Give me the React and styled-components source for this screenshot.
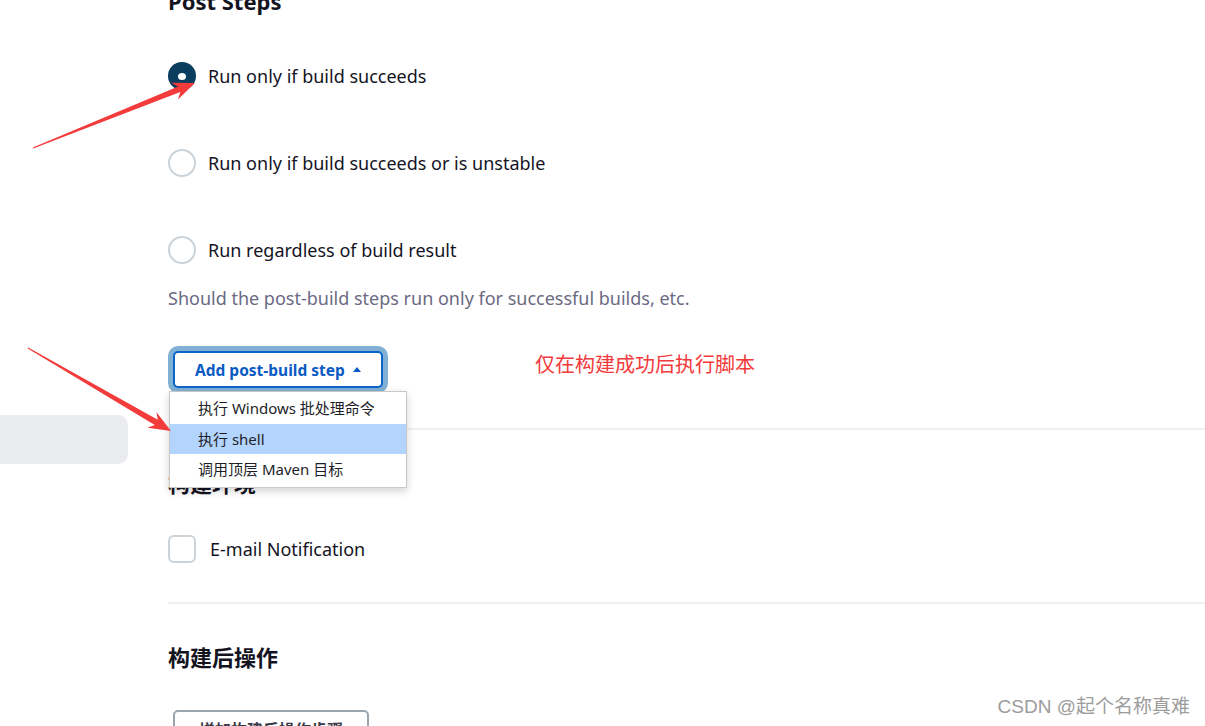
import React from "react";
import styled, { createGlobalStyle } from "styled-components";

const Global = createGlobalStyle`
  html, body { margin: 0; padding: 0; background: #fff; }
  body {
    font-family: "Noto Sans", "Noto Sans CJK SC", sans-serif;
    color: #14141f;
    overflow: hidden;
  }
`;

const Page = styled.div`
  position: relative;
  width: 1205px;
  height: 726px;
  overflow: hidden;
  display: grid;
  grid-template-columns: 168px 1fr;
`;

const Sidebar = styled.aside`
  padding-top: 415px;
`;

const SideItem = styled.div`
  width: 128px;
  height: 49px;
  background: #ebecf0;
  border-radius: 0 10px 10px 0;
`;

const Main = styled.main`
  display: flex;
  flex-direction: column;
  align-items: stretch;
`;

const Heading = styled.h2`
  margin: ${(p) => p.$mt}px 0 0;
  height: 28px;
  line-height: 28px;
  font-size: 22px;
  font-weight: 700;
  color: #14141f;
`;

const RadioList = styled.div`
  margin-top: 47px;
  display: flex;
  flex-direction: column;
  gap: 59px;
`;

const Row = styled.label`
  display: flex;
  align-items: center;
  gap: ${(p) => p.$gap || 12}px;
  height: 28px;
  font-size: 18px;
  color: #14141f;
`;

const Radio = styled.span`
  box-sizing: border-box;
  width: 28px;
  height: 28px;
  border-radius: 50%;
  flex: none;
  display: flex;
  align-items: center;
  justify-content: center;
  background: ${(p) => (p.$checked ? "#0b3d5f" : "#fff")};
  border: ${(p) => (p.$checked ? "none" : "2px solid #cbd3d9")};
  &::after {
    content: "";
    display: ${(p) => (p.$checked ? "block" : "none")};
    width: 8px;
    height: 7px;
    border-radius: 50%;
    background: #fff;
  }
`;

const Checkbox = styled.span`
  box-sizing: border-box;
  width: 28px;
  height: 28px;
  border-radius: 6px;
  border: 2px solid #cbd3d9;
  flex: none;
`;

const Help = styled.p`
  margin: 22px 0 0;
  height: 24px;
  line-height: 24px;
  font-size: 18px;
  color: #6b6a83;
`;

const ButtonArea = styled.div`
  position: relative;
  margin-top: 41px;
  margin-left: 5px;
  align-self: flex-start;
`;

const Button = styled.button`
  box-sizing: border-box;
  height: 37px;
  padding: 0 ${(p) => (p.$primary ? 20 : 24)}px;
  display: flex;
  align-items: center;
  gap: 8px;
  font-family: inherit;
  font-size: ${(p) => (p.$primary ? 15.5 : 16)}px;
  font-weight: 700;
  border-radius: 5px;
  background: #fff;
  border: 2px solid ${(p) => (p.$primary ? "#0b63cc" : "#9ba5ae")};
  color: ${(p) => (p.$primary ? "#0b5ac4" : "#3a3a48")};
  box-shadow: ${(p) => (p.$focused ? "0 0 0 5px #80b0d4" : "none")};
`;

const Caret = styled.span`
  width: 0;
  height: 0;
  border-left: 4px solid transparent;
  border-right: 4px solid transparent;
  border-bottom: 5px solid currentColor;
  margin-top: -1px;
`;

const Menu = styled.ul`
  position: absolute;
  top: 40px;
  left: -4px;
  width: 238px;
  box-sizing: border-box;
  margin: 0;
  padding: 1px 0 3px;
  list-style: none;
  background: #fff;
  border: 1px solid #c9c9c9;
  box-shadow: 0 3px 8px rgba(0, 0, 0, 0.18);
  z-index: 5;
`;

const MenuItem = styled.li`
  height: 30px;
  line-height: 30px;
  padding-left: 28px;
  font-size: 15px;
  color: #1e1e28;
  background: ${(p) => (p.$active ? "#b3d4fc" : "transparent")};
  &:first-child {
    height: 31px;
    line-height: 31px;
  }
`;

const Divider = styled.hr`
  margin: ${(p) => p.$mt}px 0 0;
  border: none;
  height: 2px;
  background: #f1f1f5;
`;

const Note = styled.div`
  position: absolute;
  left: 535px;
  top: 351px;
  font-size: 20px;
  line-height: 26px;
  color: #f2393b;
  font-family: "Noto Sans CJK SC", sans-serif;
`;

const Watermark = styled.div`
  position: absolute;
  right: 15px;
  bottom: 7px;
  font-size: 19px;
  line-height: 24px;
  color: #9c9c9c;
  font-family: "Liberation Sans", "Noto Sans CJK SC", sans-serif;
`;

const ArrowLayer = styled.svg`
  position: absolute;
  left: 0;
  top: 0;
  pointer-events: none;
  z-index: 10;
`;

function arrowPoints(x1, y1, x2, y2) {
  const dx = x2 - x1;
  const dy = y2 - y1;
  const len = Math.hypot(dx, dy);
  const ux = dx / len;
  const uy = dy / len;
  const nx = -uy;
  const ny = ux;
  const headLen = 22;
  const headW = 9;
  const innerW = 3;
  const bx = x2 - ux * headLen;
  const by = y2 - uy * headLen;
  const ix = x2 - ux * (headLen - 5);
  const iy = y2 - uy * (headLen - 5);
  const pts = [
    [x1 + nx * 0.5, y1 + ny * 0.5],
    [ix + nx * innerW, iy + ny * innerW],
    [bx + nx * headW, by + ny * headW],
    [x2, y2],
    [bx - nx * headW, by - ny * headW],
    [ix - nx * innerW, iy - ny * innerW],
    [x1 - nx * 0.5, y1 - ny * 0.5],
  ];
  return pts.map((p) => p.join(",")).join(" ");
}

const Arrow = ({ from, to }) => (
  <polygon points={arrowPoints(from[0], from[1], to[0], to[1])} fill="#f33b3b" />
);

export default function App() {
  return (
    <>
      <Global />
      <Page>
        <Sidebar>
          <SideItem />
        </Sidebar>
        <Main>
          <Heading $mt={-13}>Post Steps</Heading>
          <RadioList>
            <Row>
              <Radio $checked />
              Run only if build succeeds
            </Row>
            <Row>
              <Radio />
              Run only if build succeeds or is unstable
            </Row>
            <Row>
              <Radio />
              Run regardless of build result
            </Row>
          </RadioList>
          <Help>Should the post-build steps run only for successful builds, etc.</Help>
          <ButtonArea>
            <Button $primary $focused>
              Add post-build step <Caret />
            </Button>
            <Menu>
              <MenuItem>执行 Windows 批处理命令</MenuItem>
              <MenuItem $active>执行 shell</MenuItem>
              <MenuItem>调用顶层 Maven 目标</MenuItem>
            </Menu>
          </ButtonArea>
          <Divider $mt={40} />
          <Heading $mt={39}>构建环境</Heading>
          <Row style={{ marginTop: 38 }} $gap={14}>
            <Checkbox />
            E-mail Notification
          </Row>
          <Divider $mt={39} />
          <Heading $mt={39}>构建后操作</Heading>
          <ButtonArea style={{ marginTop: 39 }}>
            <Button>增加构建后操作步骤</Button>
          </ButtonArea>
        </Main>
        <Note>仅在构建成功后执行脚本</Note>
        <Watermark>CSDN @起个名称真难</Watermark>
        <ArrowLayer width="1205" height="726">
          <Arrow from={[33, 148]} to={[195, 83]} />
          <Arrow from={[28, 348]} to={[171, 431]} />
        </ArrowLayer>
      </Page>
    </>
  );
}
